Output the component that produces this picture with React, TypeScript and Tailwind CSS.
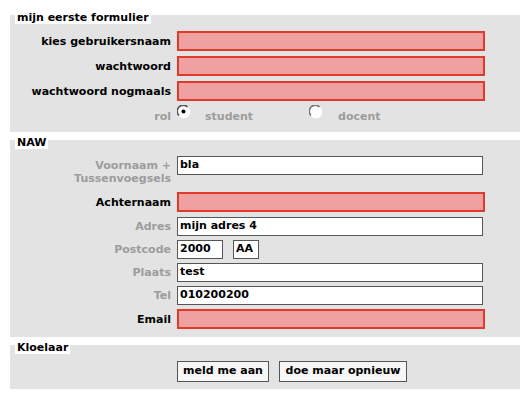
import React from "react";

const font = { fontFamily: '"DejaVu Sans", Verdana, sans-serif' };

function Radio({ checked }: { checked?: boolean }) {
  return (
    <svg width="14" height="14" viewBox="0 0 14 14" className="block">
      <circle cx="7" cy="7" r="6.3" fill="#ffffff" />
      <path d="M2 10.5 A6 6 0 0 1 10.5 2" fill="none" stroke={checked ? "#555" : "#777"} strokeWidth="1.6" />
      {checked && <circle cx="6.5" cy="6.5" r="2" fill="#000" />}
    </svg>
  );
}

function Legend({ children }: { children: React.ReactNode }) {
  return (
    <div className="flex">
      <div className="-mt-[3px] ml-[5px] bg-white px-[2px] text-[11px] font-bold leading-[12px] text-black">
        {children}
      </div>
    </div>
  );
}

function Label({ children, gray, className = "" }: { children: React.ReactNode; gray?: boolean; className?: string }) {
  return (
    <div className={`w-[161px] shrink-0 text-right text-[11px] font-bold leading-[13px] ${gray ? "text-[#9c9c9c]" : "text-black"} ${className}`}>
      {children}
    </div>
  );
}

function RedInput() {
  return <div className="ml-[6px] h-[20px] w-[308px] border-2 border-[#e23a2a] bg-[#eea1a0]" />;
}

function WhiteInput({ value, w = "w-[306px]" }: { value: string; w?: string }) {
  return (
    <div className={`flex h-[19px] items-center border border-[#555] bg-white pl-[2px] text-[11px] font-bold text-black ${w}`}>
      {value}
    </div>
  );
}

export default function App() {
  return (
    <div className="min-h-[399px] w-[529px] bg-white" style={font}>
      <div className="px-[10px] pt-[15px]">
        {/* Section 1 */}
        <div className="flex w-[510px] flex-col bg-[#e3e3e3] pb-[10px]">
          <Legend>mijn eerste formulier</Legend>
          <div className="mt-[7px] flex items-center">
            <Label>kies gebruikersnaam</Label>
            <RedInput />
          </div>
          <div className="mt-[5px] flex items-center">
            <Label>wachtwoord</Label>
            <RedInput />
          </div>
          <div className="mt-[5px] flex items-center">
            <Label>wachtwoord nogmaals</Label>
            <RedInput />
          </div>
          <div className="mt-[4px] flex h-[17px] items-start">
            <Label gray className="mt-[5px]">rol</Label>
            <div className="ml-[6px]">
              <Radio checked />
            </div>
            <div className="ml-[14px] mt-[5px] text-[11px] font-bold leading-[13px] text-[#9c9c9c]">student</div>
            <div className="ml-[56px]">
              <Radio />
            </div>
            <div className="ml-[15px] mt-[5px] text-[11px] font-bold leading-[13px] text-[#9c9c9c]">docent</div>
          </div>
        </div>

        {/* Section 2 */}
        <div className="mt-[8px] flex w-[510px] flex-col bg-[#e3e3e3] pb-[8px]">
          <Legend>NAW</Legend>
          <div className="mt-[7px] flex items-start">
            <Label gray className="pt-[3px]">
              Voornaam +<br />Tussenvoegsels
            </Label>
            <div className="ml-[6px]">
              <WhiteInput value="bla" />
            </div>
          </div>
          <div className="mt-[7px] flex items-center">
            <Label>Achternaam</Label>
            <RedInput />
          </div>
          <div className="mt-[5px] flex items-center">
            <Label gray>Adres</Label>
            <div className="ml-[6px]">
              <WhiteInput value="mijn adres 4" />
            </div>
          </div>
          <div className="mt-[4px] flex items-center">
            <Label gray>Postcode</Label>
            <div className="ml-[6px] flex gap-[10px]">
              <WhiteInput value="2000" w="w-[46px]" />
              <WhiteInput value="AA" w="w-[26px]" />
            </div>
          </div>
          <div className="mt-[4px] flex items-center">
            <Label gray>Plaats</Label>
            <div className="ml-[6px]">
              <WhiteInput value="test" />
            </div>
          </div>
          <div className="mt-[4px] flex items-center">
            <Label gray>Tel</Label>
            <div className="ml-[6px]">
              <WhiteInput value="010200200" />
            </div>
          </div>
          <div className="mt-[4px] flex items-center">
            <Label>Email</Label>
            <RedInput />
          </div>
        </div>

        {/* Section 3 */}
        <div className="mt-[8px] flex w-[510px] flex-col bg-[#e3e3e3] pb-[7px]">
          <Legend>Kloelaar</Legend>
          <div className="ml-[167px] mt-[7px] flex gap-[10px]">
            <button className="flex h-[21px] w-[92px] items-center justify-center border border-[#555] bg-[#f6f6f6] text-[11px] font-bold text-black">
              meld me aan
            </button>
            <button className="flex h-[21px] w-[128px] items-center justify-center border border-[#555] bg-[#f6f6f6] text-[11px] font-bold text-black">
              doe maar opnieuw
            </button>
          </div>
        </div>
      </div>
    </div>
  );
}
